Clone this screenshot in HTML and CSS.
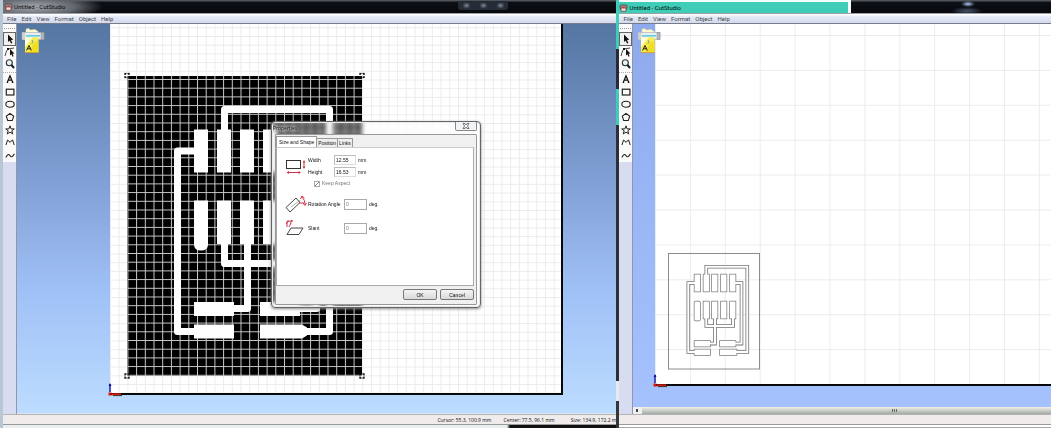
FILE: index.html
```html
<!DOCTYPE html>
<html lang="en">
<head>
<meta charset="utf-8">
<title>CutStudio</title>
<link rel="stylesheet" href="styles.css">
</head>
<body>
<svg class="defs" aria-hidden="true">
  <symbol id="i-select" viewBox="0 0 12 12"><path d="M4 1.5 L4 9 L5.7 7.4 L7 10.5 L8.3 10 L7 7 L9.3 6.8 Z" fill="#111"/></symbol>
  <symbol id="i-node" viewBox="0 0 12 12"><path d="M1 10 C2 7 2 5 4 3 L10 2" fill="none" stroke="#444" stroke-width="1"/><rect x="3" y="2" width="2" height="2" fill="#111"/><path d="M6 3 V9.5 L7.4 8.2 L8.5 10.8 L9.6 10.2 L8.6 7.8 L10.5 7.5Z" fill="#111"/></symbol>
  <symbol id="i-zoom" viewBox="0 0 12 12"><circle cx="5.3" cy="4.8" r="3" fill="#e8f6fa" stroke="#333" stroke-width="1.1"/><path d="M7.5 7 L10 10" stroke="#123" stroke-width="2"/></symbol>
  <symbol id="i-text" viewBox="0 0 12 12"><path d="M3.2 9.5 L6 2.8 L8.8 9.5 M4.5 7.2 H7.6 M2.8 9.3 H4.2 M7.8 9.3 H9.4" fill="none" stroke="#111" stroke-width="1.2"/></symbol>
  <symbol id="i-rect" viewBox="0 0 12 12"><rect x="2.3" y="3.2" width="7.6" height="5.8" fill="none" stroke="#222" stroke-width="1.2"/></symbol>
  <symbol id="i-ellipse" viewBox="0 0 12 12"><ellipse cx="6" cy="6.2" rx="4.2" ry="3" fill="none" stroke="#222" stroke-width="1.1"/></symbol>
  <symbol id="i-poly" viewBox="0 0 12 12"><path d="M6 2.4 L9.7 5.3 L8.3 9.5 H3.7 L2.3 5.3Z" fill="none" stroke="#222" stroke-width="1.1"/></symbol>
  <symbol id="i-star" viewBox="0 0 12 12"><path d="M6 1.8 L7.1 4.9 H10.3 L7.8 6.8 L8.8 10 L6 8.1 L3.2 10 L4.2 6.8 L1.7 4.9 H4.9Z" fill="none" stroke="#222" stroke-width="1"/></symbol>
  <symbol id="i-line" viewBox="0 0 12 12"><path d="M2 9 L3.5 4 L6.2 6.3 L8.5 3.8 L10.2 9" fill="none" stroke="#222" stroke-width="1"/></symbol>
  <symbol id="i-curve" viewBox="0 0 12 12"><path d="M1.8 8.4 C3.4 5.5 4.6 4.6 6 6.6 S8.6 8 10.4 4.8" fill="none" stroke="#222" stroke-width="1.1"/></symbol>
  <symbol id="i-app" viewBox="0 0 9 8"><rect x="1" y="1" width="7" height="4" rx="1" fill="#a79a98" stroke="#423a3c" stroke-width=".8"/><rect x="2" y="4" width="5" height="3.2" fill="#f4dcd8" stroke="#733" stroke-width=".7"/><path d="M2.5 3 H6.5" stroke="#b22" stroke-width=".8"/></symbol>
  <symbol id="i-cutter" viewBox="0 0 24 26">
    <path d="M5 1 L8 0.5 L9 2 L14 1.5 L17 3.5 V9 H5Z" fill="#fffbd0" stroke="#e2dc9c" stroke-width=".5"/>
    <rect x="1" y="4.5" width="22" height="7" fill="#e9edf0" stroke="#a5abb2" stroke-width=".6"/>
    <rect x="1" y="4.5" width="3" height="7" fill="#cbd0d6"/><rect x="20" y="4.5" width="3" height="7" fill="#b5b9be" stroke="#777" stroke-width=".4"/>
    <rect x="5" y="7" width="14" height="1.6" fill="#61cddc"/>
    <path d="M4 9.5 H17.5 V24.5 H4Z" fill="#f6ec4e"/><path d="M4 9.5 H12 L4 19Z" fill="#fffdd2"/><path d="M13 15 L17.5 13 V24.5 H8Z" fill="#f1dd21"/>
    <path d="M11 12 L12 14 L10.5 16" stroke="#789" stroke-width=".8" fill="none"/>
    <path d="M5.5 22.5 L8 17.5 L10.3 22.5 M6.5 20.8 H9.5" stroke="#222" stroke-width="1" fill="none"/>
    <path d="M4 24.6 H17.5" stroke="#d7902c" stroke-width=".8"/>
  </symbol>
  <symbol id="i-axis" viewBox="0 0 16 16"><path d="M3 11 V3" stroke="#10109c" stroke-width="1.4"/><path d="M1.5 5 L3 2 L4.5 5Z" fill="#10109c"/><path d="M5 13.3 H14" stroke="#d81818" stroke-width="2"/><path d="M6 14.6 H15" stroke="#331" stroke-width="1"/><rect x="1.5" y="11.5" width="3" height="3" fill="#e01010"/></symbol>
  <symbol id="i-handle" viewBox="0 0 6 6"><path d="M1 2.5 V1 H2.5 M3.5 1 H5 V2.5 M5 3.5 V5 H3.5 M2.5 5 H1 V3.5" fill="none" stroke="#111" stroke-width="1.3"/></symbol>
</svg>

<div class="desktop">
  <section class="window main-window">
    <header class="titlebar">
      <svg class="app-icon"><use href="#i-app"/></svg>
      <h1 class="title">Untitled - CutStudio</h1>
      <div class="caption-buttons"><i></i><i></i><i></i></div>
    </header>
    <nav class="menubar">
      <button>File</button><button>Edit</button><button>View</button><button>Format</button><button>Object</button><button>Help</button>
    </nav>
    <div class="body">
      <aside class="toolbox">
        <div class="tools">
          <div class="grip"></div>
          <div class="tool-group mode">
            <button class="active" aria-label="Select"><svg><use href="#i-select"/></svg></button>
            <button aria-label="Edit nodes"><svg><use href="#i-node"/></svg></button>
            <button aria-label="Zoom"><svg><use href="#i-zoom"/></svg></button>
          </div>
          <div class="tool-group draw">
            <button aria-label="Text"><svg><use href="#i-text"/></svg></button>
            <button aria-label="Rectangle"><svg><use href="#i-rect"/></svg></button>
            <button aria-label="Ellipse"><svg><use href="#i-ellipse"/></svg></button>
            <button aria-label="Polygon"><svg><use href="#i-poly"/></svg></button>
            <button aria-label="Star"><svg><use href="#i-star"/></svg></button>
            <button aria-label="Line"><svg><use href="#i-line"/></svg></button>
            <button aria-label="Curve"><svg><use href="#i-curve"/></svg></button>
          </div>
        </div>
      </aside>
      <main class="canvas">
        <svg class="cutter"><use href="#i-cutter"/></svg>
        <div class="paper">
          <svg class="art">
            <defs>
              <pattern id="fine" x="0" y="3.3" width="8.7" height="8.7" patternUnits="userSpaceOnUse"><path d="M0 .5 H8.7 M.5 0 V8.7" stroke="#ececee" stroke-width="1"/></pattern>
              <pattern id="mesh" x="110" y="79" width="8.7" height="8.7" patternUnits="userSpaceOnUse"><path d="M0 .5 H8.7 M.5 0 V8.7" stroke="#c9c9c9" stroke-width="1"/></pattern>
            </defs>
            <rect width="100%" height="100%" fill="url(#fine)"/>
            <g transform="translate(-110 -24)">
              <rect x="127.5" y="76" width="234.5" height="300" fill="#000"/>
              <rect x="127.5" y="76" width="234.5" height="300" fill="url(#mesh)"/>
              <g fill="#fff">
                <rect x="194" y="129.5" width="14" height="43"/><rect x="217" y="129.5" width="14" height="43"/><rect x="240" y="129.5" width="14" height="43"/><rect x="263" y="129.5" width="14" height="43"/>
                <path d="M194 200.5 h14 v44 q0 6 -7 6 q-7 0 -7 -6z"/><rect x="217" y="200.5" width="14" height="43.5"/><rect x="240" y="200.5" width="14" height="43.5"/><rect x="263" y="200.5" width="14" height="43.5"/>
                <rect x="194" y="302" width="40" height="14"/><rect x="194" y="324.5" width="40" height="14"/><rect x="260" y="302" width="40" height="14"/>
                <path d="M260 324.5 h42 l5 3 v8 l-5 3 h-42z"/>
              </g>
              <g fill="none" stroke="#fff" stroke-width="7" stroke-linejoin="round">
                <path d="M224.5 131 V109.5 H329.5 V331.5 H305"/><path d="M195 151 H177.5 V331.5 H196"/>
                <path d="M224.5 243 V263.5 H290"/><path d="M247.5 243 V308.5 H232"/><path d="M298 308.5 H316.5 V290"/>
              </g>
              <use href="#i-handle" x="124" y="72.5" width="6" height="6"/><use href="#i-handle" x="359" y="72.5" width="6" height="6"/>
              <use href="#i-handle" x="124" y="373" width="6" height="6"/><use href="#i-handle" x="359" y="373" width="6" height="6"/>
            </g>
          </svg>
          <svg class="axis"><use href="#i-axis"/></svg>
        </div>

        <form class="dialog" role="dialog" aria-labelledby="dlg-title">
          <header class="dialog-title"><h2 id="dlg-title">Properties</h2><button type="button" class="close" aria-label="Close"><svg viewBox="0 0 8 6"><path d="M1 .5 H3 L4 2 L5 .5 H7 L5.4 3 L7 5.5 H5 L4 4 L3 5.5 H1 L2.6 3Z" fill="#fff" stroke="#555" stroke-width=".8"/></svg></button></header>
          <div class="dialog-face">
            <div class="tabs" role="tablist"><button type="button" role="tab" class="current">Size and Shape</button><button type="button" role="tab">Position</button><button type="button" role="tab">Links</button></div>
            <div class="panel">
              <div class="row">
                <svg class="glyph" viewBox="0 0 22 18"><rect x="1.5" y="3.5" width="14" height="8" fill="none" stroke="#333"/><path d="M19 4 V11 M2.5 15.5 H15" stroke="#cf3348" stroke-width="1"/><path d="M17.7 5.5 L19 3 L20.3 5.5Z M17.7 9.5 L19 12 L20.3 9.5Z M4 14 L1.5 15.5 L4 17Z M13.5 14 L16 15.5 L13.5 17Z" fill="#cf3348"/></svg>
                <div class="fields">
                  <div class="field"><label for="w">Width</label><input id="w" value="12.55"><span>mm</span></div>
                  <div class="field"><label for="h">Height</label><input id="h" value="16.53"><span>mm</span></div>
                </div>
              </div>
              <label class="keep"><input type="checkbox" checked disabled>Keep Aspect</label>
              <div class="row angle">
                <svg class="glyph" viewBox="0 0 22 18"><path d="M1 12.5 L11 3 L15 7.5 L5 17Z" fill="none" stroke="#333" stroke-width=".9"/><path d="M6 12 L15.5 5" stroke="#777" stroke-width=".6"/><path d="M17 2 Q20 5 20 9 M15.5 4 L17 1 L19.5 3 M18 8 L20 10.5 L21.5 8 M14 8 H19" fill="none" stroke="#d6304a" stroke-width="1"/></svg>
                <div class="field wide"><label for="r">Rotation Angle</label><input id="r" value="0"><span>deg.</span></div>
              </div>
              <div class="row angle">
                <svg class="glyph" viewBox="0 0 22 18"><path d="M2 15.5 L6 9 H18 L14 15.5Z" fill="none" stroke="#333" stroke-width=".9"/><path d="M2 8 V2 H8 M1 5 L4 2 M7 1 L5.5 4.5 M4 8 L6 4" fill="none" stroke="#d6304a" stroke-width="1"/></svg>
                <div class="field wide"><label for="s">Slant</label><input id="s" value="0"><span>deg.</span></div>
              </div>
            </div>
            <footer class="actions"><button type="button">OK</button><button type="button">Cancel</button></footer>
          </div>
        </form>
      </main>
    </div>
    <footer class="statusbar"><span>Cursor: 55.3, 100.9 mm</span><span>Center: 77.5, 96.1 mm</span><span>Size: 134.9, 172.2 m</span></footer>
    <div class="window-edge"></div>
  </section>

  <section class="window side-window">
    <header class="titlebar">
      <div class="title-strip"><svg class="app-icon"><use href="#i-app"/></svg><h1 class="title">Untitled - CutStudio</h1></div>
      <div class="behind"></div>
    </header>
    <nav class="menubar">
      <button>File</button><button>Edit</button><button>View</button><button>Format</button><button>Object</button><button>Help</button>
    </nav>
    <div class="body">
      <aside class="toolbox">
        <div class="tools">
          <div class="grip"></div>
          <div class="tool-group mode">
            <button class="active" aria-label="Select"><svg><use href="#i-select"/></svg></button>
            <button aria-label="Edit nodes"><svg><use href="#i-node"/></svg></button>
            <button aria-label="Zoom"><svg><use href="#i-zoom"/></svg></button>
          </div>
          <div class="tool-group draw">
            <button aria-label="Text"><svg><use href="#i-text"/></svg></button>
            <button aria-label="Rectangle"><svg><use href="#i-rect"/></svg></button>
            <button aria-label="Ellipse"><svg><use href="#i-ellipse"/></svg></button>
            <button aria-label="Polygon"><svg><use href="#i-poly"/></svg></button>
            <button aria-label="Star"><svg><use href="#i-star"/></svg></button>
            <button aria-label="Line"><svg><use href="#i-line"/></svg></button>
            <button aria-label="Curve"><svg><use href="#i-curve"/></svg></button>
          </div>
        </div>
      </aside>
      <div class="canvas-column">
        <main class="canvas">
          <svg class="cutter"><use href="#i-cutter"/></svg>
          <div class="paper">
            <svg class="art">
              <defs>
                <pattern id="coarse" x="0" y="11" width="34.9" height="34.9" patternUnits="userSpaceOnUse"><path d="M0 .5 H34.9 M.5 0 V34.9" stroke="#ececee" stroke-width="1"/></pattern>
                <g id="traces" fill="none"><path d="M695 283 H688.3 V352 H695"/><path d="M706.3 275 V266.7 H747.3 V352 H736"/><path d="M735 283 H741.5 V343.6 H735"/><path d="M706.3 317 V326 H733 V317"/><path d="M715 317 V343.6 H709"/></g>
                <g id="pads">
                  <rect x="694.5" y="274.5" width="5.5" height="17"/><rect x="703.5" y="274.5" width="5.5" height="17"/><rect x="712" y="274.5" width="5.5" height="17"/><rect x="721" y="274.5" width="5.5" height="17"/><rect x="730" y="274.5" width="5.5" height="17"/>
                  <rect x="694.5" y="301.5" width="5.5" height="19" rx="1"/><rect x="703.5" y="301.5" width="5.5" height="17"/><rect x="712" y="301.5" width="5.5" height="17"/><rect x="721" y="301.5" width="5.5" height="17"/><rect x="730" y="301.5" width="5.5" height="17"/>
                  <rect x="694.5" y="341" width="15.5" height="5.5"/><rect x="694.5" y="349.5" width="15.5" height="5.5"/><rect x="720" y="341" width="15.5" height="5.5"/><rect x="720" y="349.5" width="16.5" height="5.5"/>
                </g>
              </defs>
              <rect width="100%" height="100%" fill="url(#coarse)"/>
              <g transform="translate(-655 -24)">
                <rect x="668.5" y="253.5" width="91" height="115.5" fill="none" stroke="#8c8c8c"/>
                <use href="#traces" stroke="#737373" stroke-width="3.6"/><use href="#pads" fill="#737373" stroke="#737373" stroke-width="1.4"/>
                <use href="#traces" stroke="#fff" stroke-width="2"/><use href="#pads" fill="#fff"/>
              </g>
            </svg>
            <svg class="axis"><use href="#i-axis"/></svg>
          </div>
        </main>
        <div class="scrollbar"><span class="arrow"></span><span class="thumb"></span></div>
      </div>
    </div>
    <footer class="statusbar"></footer>
    <div class="window-edge"></div>
  </section>
</div>
</body>
</html>
```
FILE: styles.css
```css
* { box-sizing: border-box; }
body { margin: 0; background: #101216; font-family: "Open Sans", sans-serif; font-size: 5px; color: #111; }
h1, h2 { margin: 0; font-size: inherit; font-weight: 400; }
button, input { font: inherit; color: inherit; margin: 0; padding: 0; border: 0; background: none; }
svg { display: block; }
.defs { position: absolute; width: 0; height: 0; }

.desktop { display: flex; min-height: 100vh; }
.window { display: flex; flex-direction: column; min-width: 0; overflow: hidden; }
.main-window { flex: 617; border-left: 3px solid #b7c7d4; }
.side-window { flex: 434; border-left: 3px solid; border-image: linear-gradient(#3fcdb8 0 50px, #262b35 50px 90px, #3fcdb8 90px 125px, #2c3036 125px 380px, #e8eaec 380px 400px, #33373b 400px) 1; }

.titlebar { display: flex; align-items: center; height: 14px; background: linear-gradient(#50545a 0 1px, #0c0f14 2px, #06080c); border-bottom: 1px solid #9aa0a6; }
.main-window .titlebar { background: radial-gradient(ellipse 70px 14px at 30px 7px, #a4a8ae, #62676e 60%, transparent), linear-gradient(#50545a 0 1px, #0c0f14 2px, #06080c); }
.app-icon { width: 9px; height: 8px; margin-left: 1px; flex: none; }
.title { flex: none; margin-left: 1px; font-family: Roboto, sans-serif; font-size: 6px; line-height: 8px; color: #050505; white-space: nowrap; }
.caption-buttons { display: flex; justify-content: space-around; align-items: center; width: 50px; height: 9px; margin: 0 108px 2px auto; background: #262c36; border-radius: 0 0 3px 3px; }
.caption-buttons i { width: 5px; height: 3px; background: #8996aa; border-radius: 2px; filter: blur(1px); }
.title-strip { display: flex; align-items: center; width: 232px; height: 13px; background: #3fcdb8; border: solid #f4fffd; border-width: 4px 3px 0 0; flex: none; }
.side-window .app-icon { margin-left: 0; }
.side-window .title-strip { border-top-width: 2px; }
.behind { flex: 1; align-self: stretch; background: radial-gradient(ellipse 7px 3px at 117px 4px, #a9c6ee, transparent), radial-gradient(ellipse 16px 4px at 116px 11px, #48566a, transparent); }

.menubar { display: flex; align-items: center; gap: 5px; height: 10px; padding-left: 4px; background: linear-gradient(#fff 0 1px, #e9ecf8 2px, #d3d9ee); border-bottom: 1px solid #777c88; color: #444; font-family: Roboto, sans-serif; font-size: 6px; flex: none; }
.menubar button { line-height: 7px; }
.body { display: flex; flex: 1; }

.toolbox { width: 14px; flex: none; background: #d8dcf0; border-right: 1px solid #9296a6; }
.tools { height: 138px; padding-top: 4px; background: #fbfbfb; }
.grip { height: 2px; border-top: 1px dotted #999; margin: 0 1px 2px; }
.tool-group { display: grid; grid-auto-rows: 1fr; }
.tool-group button { display: grid; place-items: center; width: 13px; }
.tool-group svg { width: 12px; height: 12px; }
.mode { height: 38px; margin-bottom: 2px; }
.draw { height: 89px; border-top: 1px dotted #aaa; }
.tool-group .active { border: 1px solid #666; background: #f0f0f0; }

.canvas { position: relative; display: flex; flex: 1; background: linear-gradient(#5476a1, #7e9dd2 38%, #9fc0f6 68%, #bcdcff); }
.main-window .canvas { padding: 0 53px 18px 93px; border-bottom: 1px solid #dce6f0; }
.side-window .canvas { padding: 0 0 21px 22px; background: linear-gradient(#8eaaec, #a5c2ff); }
.cutter { position: absolute; top: 4px; left: 4px; width: 24px; height: 26px; z-index: 1; }
.paper { position: relative; flex: 1; background: #fff; border: solid #080808; border-width: 0 2px 2px 0; }
.side-window .paper { border-right: 0; }
.art { width: 100%; height: 100%; position: absolute; }
.axis { position: absolute; left: -3px; bottom: -4px; width: 16px; height: 16px; }

.canvas-column { display: flex; flex-direction: column; flex: 1; }
.scrollbar { display: grid; grid-template-columns: 9px 1fr; height: 7px; background: linear-gradient(#f5f0e4, #b9c1bc 70%, #a2a8a5); }
.arrow { background: linear-gradient(90deg, transparent 3px, #444 3px 5px, transparent 5px) 0 2px / 9px 3px no-repeat #eef0f2; }
.thumb { background: repeating-linear-gradient(90deg, #666 0 1px, transparent 1px 2px) 62% 2px / 6px 3px no-repeat; }
.statusbar { display: flex; align-items: center; justify-content: flex-end; gap: 12px; height: 11px; flex: none; background: #f0ecec; border-top: 1px solid #b5b2b2; border-bottom: 1px solid #999; white-space: nowrap; }
.statusbar span:last-child { margin-left: 4px; }
.window-edge { height: 3px; flex: none; background: linear-gradient(#fff 0 2px, #a5a5a5 2px); }
.main-window .window-edge { background: linear-gradient(90deg, #e9eef1 0 504px, #111 507px); }

.dialog { position: absolute; left: 254px; top: 97px; width: 210px; padding: 0 3px 2px; border: 1px solid #62666b; border-radius: 4px; background: rgba(255, 255, 255, .3); backdrop-filter: blur(2px); box-shadow: inset 0 0 0 1px #e7e9eb, 0 1px 3px #888; font-family: "Liberation Sans", sans-serif; z-index: 2; }
.dialog-title { display: flex; justify-content: space-between; align-items: flex-start; height: 12px; }
.dialog-title h2 { line-height: 12px; margin-left: -2px; color: #111; text-shadow: 0 0 3px #fff, 0 0 3px #fff; font-family: "Open Sans", sans-serif; }
.close { display: grid; place-items: center; width: 22px; height: 9px; border: 1px solid #888; border-top: 0; border-radius: 0 0 2px 2px; background: #f2f3f4; }
.close svg { width: 8px; height: 6px; }
.dialog-face { background: #f0f0f0; border: 1px solid #999; border-radius: 1px; }
.tabs { display: flex; align-items: flex-end; height: 12px; }
.tabs button { height: 9px; padding: 0 1px; background: #eee; border: 1px solid #999; border-left-width: 0; border-bottom: 0; }
.tabs .current { height: 11px; padding: 0 2px; background: #fff; border-left-width: 1px; }
.panel { display: flex; flex-direction: column; height: 139px; margin-right: 2px; padding: 6px 8px; background: #fff; border: 1px solid #aaa; border-top-color: #ccc; }
.row { display: flex; align-items: center; gap: 1px; }
.glyph { width: 22px; height: 18px; flex: none; }
.field { display: grid; grid-template-columns: 24px 22px auto; align-items: center; column-gap: 2px; height: 12px; }
.field input { width: 22px; height: 10px; padding: 0 1px; border: 1px solid #ccc; border-color: #bbb #ddd #ddd #bbb; }
.field.wide { grid-template-columns: 34px 23px auto; }
.field.wide input { height: 11px; width: 23px; border-color: #aaa; color: #777; }
.keep { display: flex; align-items: center; gap: 2px; margin: 2px 0 5px 29px; line-height: 7px; color: #777; }
.keep input { appearance: none; width: 6px; height: 6px; border: 1px solid #aaa; background: linear-gradient(135deg, transparent 40%, #888 40% 60%, transparent 60%); }
.angle { height: 24px; }
.actions { display: flex; justify-content: flex-end; gap: 3px; padding: 3px 2px 4px; }
.actions button { width: 34px; height: 11px; border: 1px solid #777; border-radius: 2px; background: linear-gradient(#f5f5f5, #d9d9d9); }
```
